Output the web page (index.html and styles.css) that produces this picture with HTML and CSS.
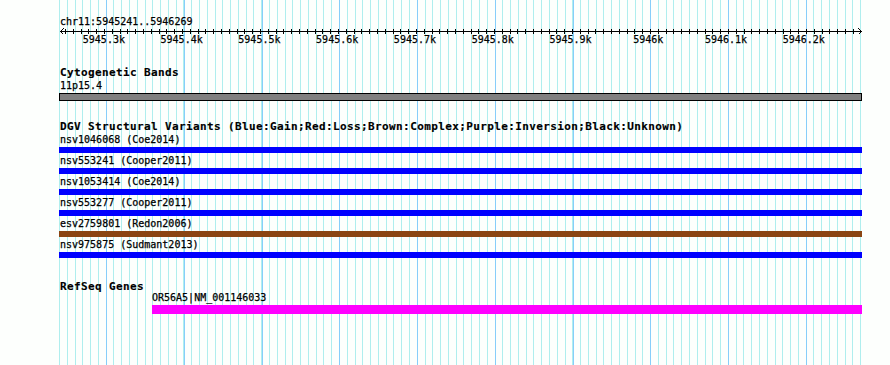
FILE: index.html
```html
<!DOCTYPE html>
<html lang="en">
<head>
    <meta charset="UTF-8">
    <title>chr11:5945241..5946269</title>
    <link rel="stylesheet" href="styles.css">
</head>
<body>

<div class="panel">

    <!-- Ruler -->
    <section class="ruler">
        <div class="ruler-title">chr11:5945241..5946269</div>
        <div class="axis">
            <svg class="arrow" width="6" height="7"><polyline points="4.5,0.5 1.5,3.5 4.5,6.5"/></svg>
            <div class="ticks"></div>
            <svg class="arrow" width="8" height="7"><polyline points="4.5,0.5 7.5,3.5 4.5,6.5"/></svg>
        </div>
        <div class="tick-labels">
            <span>5945.3k</span>
            <span>5945.4k</span>
            <span>5945.5k</span>
            <span>5945.6k</span>
            <span>5945.7k</span>
            <span>5945.8k</span>
            <span>5945.9k</span>
            <span>5946k</span>
            <span>5946.1k</span>
            <span>5946.2k</span>
        </div>
    </section>

    <!-- Cytogenetic bands -->
    <section class="track track-cyto">
        <h2 class="track-title">Cytogenetic Bands</h2>
        <div class="feature-label">11p15.4</div>
        <div class="band"></div>
    </section>

    <!-- DGV structural variants -->
    <section class="track track-dgv">
        <h2 class="track-title">DGV Structural Variants (Blue:Gain;Red:Loss;Brown:Complex;Purple:Inversion;Black:Unknown)</h2>
        <div class="variant">
            <div class="feature-label">nsv1046068 (Coe2014)</div>
            <div class="variant-bar gain"></div>
        </div>
        <div class="variant">
            <div class="feature-label">nsv553241 (Cooper2011)</div>
            <div class="variant-bar gain"></div>
        </div>
        <div class="variant">
            <div class="feature-label">nsv1053414 (Coe2014)</div>
            <div class="variant-bar gain"></div>
        </div>
        <div class="variant">
            <div class="feature-label">nsv553277 (Cooper2011)</div>
            <div class="variant-bar gain"></div>
        </div>
        <div class="variant">
            <div class="feature-label">esv2759801 (Redon2006)</div>
            <div class="variant-bar complex"></div>
        </div>
        <div class="variant">
            <div class="feature-label">nsv975875 (Sudmant2013)</div>
            <div class="variant-bar gain"></div>
        </div>
    </section>

    <!-- RefSeq genes -->
    <section class="track track-genes">
        <h2 class="track-title">RefSeq Genes</h2>
        <div class="gene">
            <div class="feature-label gene-label">OR56A5|NM_001146033</div>
            <div class="gene-bar"></div>
        </div>
    </section>

</div>

</body>
</html>
```

FILE: styles.css
```css
body {
    margin: 0;
    padding: 0;
    background-color: #fdfffd;
    font-family: "DejaVu Sans Mono", monospace;
    font-size: 10px;
    color: #000;
    -webkit-text-stroke: 0.25px #000; /* closer to the crisp bitmap font */
}

/* Track panel with the base-pair grid behind it */
.panel {
    margin-left: 59px;
    width: 803px;
    height: 365px;
    background-image:
        repeating-linear-gradient(90deg, #87cefa 0 1px, transparent 1px 77.78px),
        repeating-linear-gradient(90deg, #afeeee 0 1px, transparent 1px 7.778px);
    background-position: 47px 0, 0 0;
    background-repeat: no-repeat;
}

/* Ruler */
.ruler {
    padding-top: 15px;
}

.ruler-title {
    line-height: 13px;
    padding-left: 1px;
}

.axis {
    display: flex;
    height: 7px;
    background-image: linear-gradient(#000, #000);
    background-size: 802px 1px;
    background-position: 1px 3px;
    background-repeat: no-repeat;
}

.arrow {
    display: block;
    flex: none;
}

.arrow polyline {
    fill: none;
    stroke: #000;
    stroke-width: 1;
    shape-rendering: crispEdges;
}

.ticks {
    flex: 1;
    height: 5px;
    margin-top: 1px;
    background-image: repeating-linear-gradient(90deg, #000 0 1px, transparent 1px 7.8px);
}

.tick-labels {
    display: flex;
    margin-top: -2px;
    padding-left: 6px;
    line-height: 13px;
}

.tick-labels span {
    flex: none;
    width: 77.78px;
    text-align: center;
}

/* Tracks */
.track-title {
    margin: 0;
    font-size: 11px;
    font-weight: bold;
    letter-spacing: 0.38px;
    line-height: 12px;
    padding-left: 1px;
    white-space: nowrap;
    -webkit-text-stroke: 0.15px #000;
}

.track-cyto {
    margin-top: 21px;
}

.track-dgv {
    margin-top: 20px;
}

.track-genes {
    margin-top: 22px;
}

.feature-label {
    line-height: 13px;
    padding-left: 1px;
    white-space: nowrap;
}

.band {
    height: 8px;
    margin-top: 1px;
    box-sizing: border-box;
    border: 1px solid #000;
    background-color: #808080;
}

.variant {
    padding-bottom: 1px;
}

.variant-bar {
    height: 6px;
    margin-top: 1px;
}

.gain {
    background-color: #0000ff;
}

.complex {
    background-color: #8b4513;
}

.gene {
    margin-left: 93px;
}

.gene-label {
    margin-top: -2px;
    padding-left: 0;
}

.gene-bar {
    height: 9px;
    margin-top: 1px;
    background-color: #ff00ff;
}
```
